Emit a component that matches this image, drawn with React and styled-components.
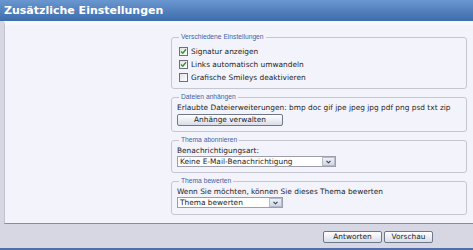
import React from 'react'
import styled, { createGlobalStyle } from 'styled-components'

const GlobalStyle = createGlobalStyle`
	html, body {
		margin: 0;
		padding: 0;
		background: #d7d7e3;
	}
	body {
		font-family: "DejaVu Sans", Verdana, sans-serif;
		color: #1e1e24;
	}
`

const Page = styled.div`
	width: 473px;
	height: 250px;
	display: flex;
	flex-direction: column;
	background: #d7d7e3;
	border-bottom: 2px solid #4f6fab;
	box-sizing: border-box;
`

const Header = styled.div`
	height: 21px;
	flex: 0 0 auto;
	display: flex;
	align-items: center;
	padding-left: 4px;
	background: linear-gradient(#6a97cf, #3d6cad);
	color: #fff;
	font-family: "DejaVu Sans", Verdana, sans-serif;
	font-weight: bold;
	font-size: 11px;
`

const Panel = styled.div`
	height: 203px;
	margin-left: 4px;
	flex: 0 0 auto;
	display: grid;
	grid-template-columns: 166px 1fr;
	background: #f3f3fb;
	border-top: 4px solid #f7f7fc;
	border-left: 1px solid #c3c3cf;
	border-bottom: 1px solid #8b8b9c;
	box-sizing: border-box;
`

const Column = styled.div`
	display: flex;
	flex-direction: column;
	gap: 4px;
	padding: 8px 6px 0 0;
`

const Fieldset = styled.fieldset`
	margin: 0;
	padding: 0 5px ${p => p.$bottom || 4}px 5px;
	border: 1px solid #c6c6d2;
	border-radius: 3px;
	min-width: 0;
	flex: 0 0 auto;
`

const Legend = styled.legend`
	font-family: "Liberation Sans", Arial, sans-serif;
	font-size: 6.7px;
	line-height: 8px;
	color: #3f63a6;
	padding: 0 2px;
	margin-left: 2px;
`

const CheckList = styled.div`
	padding-top: 4px;
`

const CheckRow = styled.label`
	display: flex;
	align-items: center;
	gap: 3px;
	height: 13px;
	padding-left: 2px;
	font-size: 7.4px;
`

const Box = styled.span`
	width: 9px;
	height: 9px;
	box-sizing: border-box;
	border: 1px solid #6e6e7c;
	background: linear-gradient(135deg, #e2e2e6, #ffffff);
	display: flex;
	align-items: center;
	justify-content: center;
`

const Line = styled.div`
	margin-top: 2px;
	font-size: 7.4px;
	line-height: 10px;
	white-space: nowrap;
`

const Button = styled.button`
	display: block;
	height: 12px;
	width: ${p => p.$w}px;
	margin-top: ${p => p.$mt || 0}px;
	padding: 0;
	border: 1px solid #6f778b;
	border-radius: 2px;
	background: linear-gradient(#ffffff, #d9dde8);
	font-family: "DejaVu Sans", Verdana, sans-serif;
	font-size: 7.4px;
	line-height: 10px;
	color: #1e1e24;
`

const Select = styled.div`
	width: ${p => p.$w}px;
	height: 11px;
	box-sizing: border-box;
	border: 1px solid #9d9dae;
	background: #fff;
	display: flex;
	align-items: center;
	font-size: 7.4px;
`

const SelectText = styled.span`
	flex: 1;
	padding-left: 2px;
	white-space: nowrap;
`

const Arrow = styled.span`
	width: 13px;
	height: 9px;
	box-sizing: border-box;
	border: 1px solid #b5bccb;
	background: linear-gradient(#eef1f7, #cfd6e4);
	display: flex;
	align-items: center;
	justify-content: center;
`

const Footer = styled.div`
	flex: 1;
	display: flex;
	justify-content: flex-end;
	align-items: flex-start;
	gap: 2px;
	padding: 7px 40px 0 0;
`

const Check = () => (
	<svg width="7" height="7" viewBox="0 0 7 7">
		<path d="M1 3.5 L2.8 5.3 L6 1.3" fill="none" stroke="#2c9a2c" strokeWidth="1.4" />
	</svg>
)

const Chevron = () => (
	<svg width="5" height="4" viewBox="0 0 5 4">
		<path d="M0.5 0.8 L2.5 2.8 L4.5 0.8" fill="none" stroke="#333a4a" strokeWidth="1.1" />
	</svg>
)

function CheckOption({ checked, children }) {
	return (
		<CheckRow>
			<Box>{checked && <Check />}</Box>
			{children}
		</CheckRow>
	)
}

export default function App() {
	return (
		<>
			<GlobalStyle />
			<Page>
				<Header>Zusätzliche Einstellungen</Header>
				<Panel>
					<div />
					<Column>
						<Fieldset $bottom={4}>
							<Legend>Verschiedene Einstellungen</Legend>
							<CheckList>
								<CheckOption checked>Signatur anzeigen</CheckOption>
								<CheckOption checked>Links automatisch umwandeln</CheckOption>
								<CheckOption>Grafische Smileys deaktivieren</CheckOption>
							</CheckList>
						</Fieldset>
						<Fieldset $bottom={5}>
							<Legend>Dateien anhängen</Legend>
							<Line>Erlaubte Dateierweiterungen: bmp doc gif jpe jpeg jpg pdf png psd txt zip</Line>
							<Button $w={106} $mt={1}>Anhänge verwalten</Button>
						</Fieldset>
						<Fieldset $bottom={5}>
							<Legend>Thema abonnieren</Legend>
							<Line>Benachrichtigungsart:</Line>
							<Select $w={159}>
								<SelectText>Keine E-Mail-Benachrichtigung</SelectText>
								<Arrow><Chevron /></Arrow>
							</Select>
						</Fieldset>
						<Fieldset $bottom={6}>
							<Legend>Thema bewerten</Legend>
							<Line>Wenn Sie möchten, können Sie dieses Thema bewerten</Line>
							<Select $w={106}>
								<SelectText>Thema bewerten</SelectText>
								<Arrow><Chevron /></Arrow>
							</Select>
						</Fieldset>
					</Column>
				</Panel>
				<Footer>
					<Button $w={59}>Antworten</Button>
					<Button $w={49}>Vorschau</Button>
				</Footer>
			</Page>
		</>
	)
}
